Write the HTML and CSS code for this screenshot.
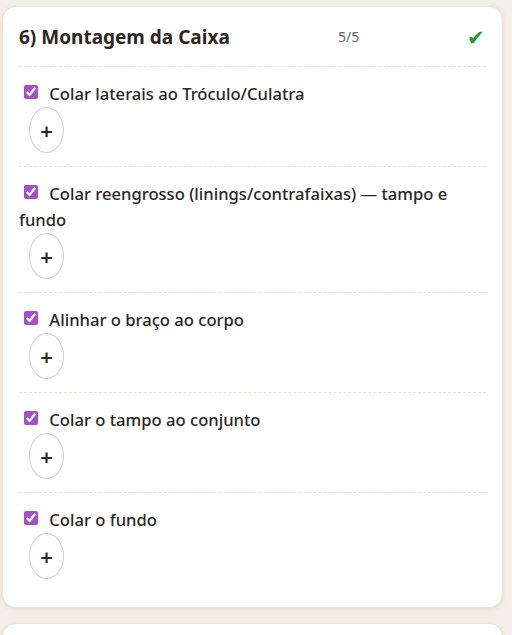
FILE: index.html
```html
<!DOCTYPE html>
<html lang="pt-BR">
<head>
    <meta charset="UTF-8">
    <meta name="viewport" content="width=device-width, initial-scale=1.0">
    <title>Montagem da Caixa</title>
    <link rel="stylesheet" href="styles.css">
</head>
<body>
    <div class="stage">
        <div class="stage-head">
            <h2>6) Montagem da Caixa</h2>
            <span class="count">5/5</span>
            <span class="done">✔</span>
        </div>

        <div class="step">
            <label><input type="checkbox" checked> Colar laterais ao Tróculo/Culatra</label>
            <button class="add">+</button>
        </div>
        <div class="step">
            <label><input type="checkbox" checked> Colar reengrosso (linings/contrafaixas) — tampo e fundo</label>
            <button class="add">+</button>
        </div>
        <div class="step">
            <label><input type="checkbox" checked> Alinhar o braço ao corpo</label>
            <button class="add">+</button>
        </div>
        <div class="step">
            <label><input type="checkbox" checked> Colar o tampo ao conjunto</label>
            <button class="add">+</button>
        </div>
        <div class="step">
            <label><input type="checkbox" checked> Colar o fundo</label>
            <button class="add">+</button>
        </div>
    </div>
    <div class="stage"></div>
</body>
</html>
```

FILE: styles.css
```css
body {
    font-family: "Noto Sans", "Open Sans", sans-serif;
    margin: 0;
    padding: 6px 9px 0 2px;
    background-color: #f3eee6;
    color: #2b2622;
    overflow: hidden;
}
.stage {
    background-color: #fff;
    border: 1px solid #ece3d3;
    border-radius: 14px;
    padding: 0 16px 15px;
    margin-bottom: 15px;
    box-shadow: 0 1px 4px rgba(120, 100, 60, 0.12);
    min-height: 20px;
}
.stage-head {
    display: flex;
    align-items: center;
    height: 59px;
    border-bottom: 1px dashed #e9e1cf;
}
.stage-head h2 {
    margin: 0;
    font-size: 19px;
    font-weight: 700;
    flex: 1;
}
.count {
    font-size: 14px;
    color: #666;
    width: 129px;
}
.done {
    color: #1e9a3c;
    font-size: 21px;
    margin-right: 1px;
}
.step {
    padding: 14px 0 13px;
    border-bottom: 1px dashed #e9e1cf;
}
.step:last-child {
    border-bottom: none;
}
.step label {
    display: block;
    font-size: 16.6px;
    font-weight: 500;
    line-height: 26px;
}
.step input {
    width: 14px;
    height: 14px;
    margin: 0 7px 0 5px;
    accent-color: #a64fc6;
    vertical-align: 1px;
}
.add {
    display: block;
    width: 35px;
    height: 46px;
    margin-left: 10px;
    border: 1px solid #cfcfcf;
    border-radius: 50%;
    background-color: #fff;
    color: #2e2618;
    font-family: "Noto Sans", sans-serif;
    font-size: 22px;
    font-weight: 600;
    line-height: 1;
    padding: 0;
}
```
